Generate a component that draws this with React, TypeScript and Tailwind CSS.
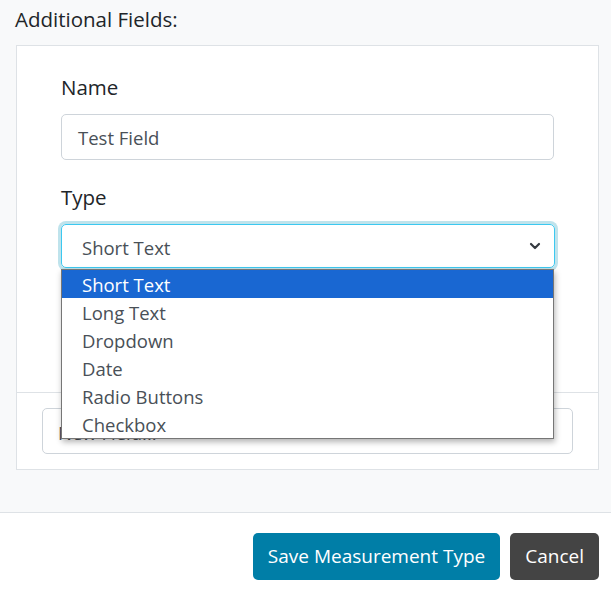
import React from "react";

export default function App() {
  const options = ["Short Text", "Long Text", "Dropdown", "Date", "Radio Buttons", "Checkbox"];
  return (
    <div className="w-[611px] h-[594px] bg-white font-['Open_Sans',sans-serif] text-[18.5px] overflow-hidden">
      <div className="h-[513px] bg-[#f8f9fa] border-b border-[#dee2e6] pl-4 pr-3 pt-[6px]">
        <div className="leading-[27px] text-[20.5px] text-[#212529] -ml-px">Additional Fields:</div>
        <div className="mt-[12px] bg-white border border-[#dee2e6]">
          <div className="px-[44px] pt-[28px] pb-[124px]">
            <div className="leading-[27px] text-[20.5px] text-[#212529]">Name</div>
            <div className="mt-[13px] h-[46px] w-[493px] border border-[#ced4da] rounded-[5px] flex items-center px-4 pt-[2px] text-[#495057]">
              Test Field
            </div>
            <div className="mt-[24px] leading-[27px] text-[20.5px] text-[#212529]">Type</div>
            <div className="relative mt-[13px] w-[494px]">
              <div className="h-[44px] border border-[#3cc8f0] rounded-[5px] ring-[3px] ring-[#bfe3ec] flex items-center pl-[20px] pr-3 text-[#495057] justify-between">
                <span className="pt-[3px]">Short Text</span>
                <svg width="12" height="8" viewBox="0 0 12 8" className="mr-[1px]">
                  <path d="M2 2 L6 6 L10 2" stroke="#343a40" strokeWidth="2.2" fill="none" strokeLinecap="round" strokeLinejoin="round" />
                </svg>
              </div>
              <div className="absolute left-0 top-[45px] w-[493px] bg-white border border-[#767676] shadow-[1px_3px_6px_rgba(0,0,0,0.3)] z-10">
                {options.map((o, i) => (
                  <div
                    key={o}
                    className={
                      i === 0
                        ? "h-[28px] leading-[28px] pt-px pl-[20px] bg-[#1967d2] text-white"
                        : "h-[28px] leading-[28px] pt-px pl-[20px] text-[#495057]"
                    }
                  >
                    {o}
                  </div>
                ))}
              </div>
            </div>
          </div>
          <div className="border-t border-[#dee2e6] px-[25px] pt-[15px] pb-[15px]">
            <div className="h-[46px] border border-[#ced4da] rounded-[5px] flex items-center pl-[15px] pr-4 pt-[4px] text-[#495057]">
              New Field...
            </div>
          </div>
        </div>
      </div>
      <div className="flex justify-end gap-[10px] pr-3 pt-[20px]">
        <button className="h-[47px] px-[15px] rounded-[5px] bg-[#007ea7] text-white text-[19px]">Save Measurement Type</button>
        <button className="h-[47px] px-[15px] rounded-[5px] bg-[#444444] text-white text-[19px]">Cancel</button>
      </div>
    </div>
  );
}
